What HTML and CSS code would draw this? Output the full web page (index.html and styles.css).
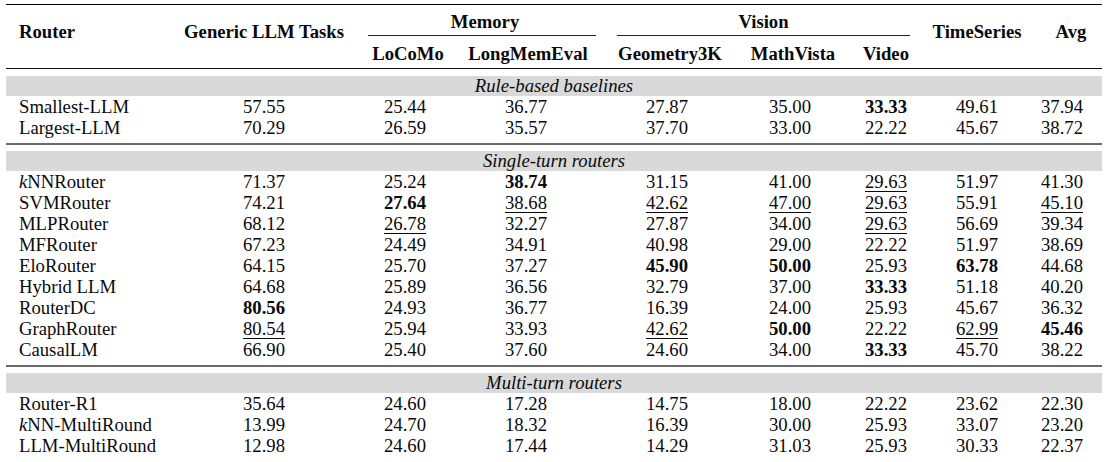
FILE: index.html
```html
<!DOCTYPE html>
<html>
<head>
<meta charset="utf-8">
<link rel="stylesheet" href="styles.css">
</head>
<body>
<div class="table">
  <div class="head">
    <div class="hc span2 left">Router</div>
    <div class="hc span2">Generic LLM Tasks</div>
    <div class="grp grp-mem">Memory</div>
    <div class="grp grp-vis">Vision</div>
    <div class="hc span2 c-ts">TimeSeries</div>
    <div class="hc span2 c-avg">Avg</div>
    <div class="sub c-loc">LoCoMo</div>
    <div class="sub c-lme">LongMemEval</div>
    <div class="sub c-geo">Geometry3K</div>
    <div class="sub c-mv">MathVista</div>
    <div class="sub c-vid">Video</div>
  </div>

  <section class="group">
    <div class="band">Rule-based baselines</div>
    <div class="row"><span>Smallest-LLM</span><span>57.55</span><span>25.44</span><span>36.77</span><span>27.87</span><span>35.00</span><span><b>33.33</b></span><span>49.61</span><span>37.94</span></div>
    <div class="row"><span>Largest-LLM</span><span>70.29</span><span>26.59</span><span>35.57</span><span>37.70</span><span>33.00</span><span>22.22</span><span>45.67</span><span>38.72</span></div>
  </section>

  <section class="group">
    <div class="band">Single-turn routers</div>
    <div class="row"><span><i>k</i>NNRouter</span><span>71.37</span><span>25.24</span><span><b>38.74</b></span><span>31.15</span><span>41.00</span><span><u>29.63</u></span><span>51.97</span><span>41.30</span></div>
    <div class="row"><span>SVMRouter</span><span>74.21</span><span><b>27.64</b></span><span><u>38.68</u></span><span><u>42.62</u></span><span><u>47.00</u></span><span><u>29.63</u></span><span>55.91</span><span><u>45.10</u></span></div>
    <div class="row"><span>MLPRouter</span><span>68.12</span><span><u>26.78</u></span><span>32.27</span><span>27.87</span><span>34.00</span><span><u>29.63</u></span><span>56.69</span><span>39.34</span></div>
    <div class="row"><span>MFRouter</span><span>67.23</span><span>24.49</span><span>34.91</span><span>40.98</span><span>29.00</span><span>22.22</span><span>51.97</span><span>38.69</span></div>
    <div class="row"><span>EloRouter</span><span>64.15</span><span>25.70</span><span>37.27</span><span><b>45.90</b></span><span><b>50.00</b></span><span>25.93</span><span><b>63.78</b></span><span>44.68</span></div>
    <div class="row"><span>Hybrid LLM</span><span>64.68</span><span>25.89</span><span>36.56</span><span>32.79</span><span>37.00</span><span><b>33.33</b></span><span>51.18</span><span>40.20</span></div>
    <div class="row"><span>RouterDC</span><span><b>80.56</b></span><span>24.93</span><span>36.77</span><span>16.39</span><span>24.00</span><span>25.93</span><span>45.67</span><span>36.32</span></div>
    <div class="row"><span>GraphRouter</span><span><u>80.54</u></span><span>25.94</span><span>33.93</span><span><u>42.62</u></span><span><b>50.00</b></span><span>22.22</span><span><u>62.99</u></span><span><b>45.46</b></span></div>
    <div class="row"><span>CausalLM</span><span>66.90</span><span>25.40</span><span>37.60</span><span>24.60</span><span>34.00</span><span><b>33.33</b></span><span>45.70</span><span>38.22</span></div>
  </section>

  <section class="group">
    <div class="band">Multi-turn routers</div>
    <div class="row"><span>Router-R1</span><span>35.64</span><span>24.60</span><span>17.28</span><span>14.75</span><span>18.00</span><span>22.22</span><span>23.62</span><span>22.30</span></div>
    <div class="row"><span><i>k</i>NN-MultiRound</span><span>13.99</span><span>24.70</span><span>18.32</span><span>16.39</span><span>30.00</span><span>25.93</span><span>33.07</span><span>23.20</span></div>
    <div class="row"><span>LLM-MultiRound</span><span>12.98</span><span>24.60</span><span>17.44</span><span>14.29</span><span>31.03</span><span>25.93</span><span>30.33</span><span>22.37</span></div>
  </section>
</div>
</body>
</html>
```

FILE: styles.css
```css
html, body {
  margin: 0;
  padding: 0;
  background: #fff;
}

body {
  width: 1106px;
  height: 462px;
  overflow: hidden;
  font-family: "Liberation Serif", "Times New Roman", serif;
  font-size: 18.7px;
  color: #0a0a0a;
}

.table {
  margin: 4px 0 0 6px;
  width: 1096px;
}

.head,
.row {
  display: grid;
  grid-template-columns: 160px 196px 86px 156px 126px 120px 72px 110px 70px;
}

.head {
  grid-template-rows: 31px 32px;
  border-top: 1.6px solid #000;
  border-bottom: 1px solid #111;
  font-weight: bold;
  line-height: 21px;
}

.hc {
  text-align: center;
  padding-top: 16px;
}

.span2 {
  grid-row: 1 / span 2;
}

.left {
  text-align: left;
  padding-left: 13px;
}

.grp {
  display: flex;
  align-items: center;
  justify-content: center;
  padding-top: 2px;
  border-bottom: 1px solid #222;
}

.grp-mem {
  grid-column: 3 / span 2;
  margin: 0 8px 0 6px;
  padding-left: 6px;
}

.grp-vis {
  grid-column: 5 / span 3;
  margin: 0 12px 0 13px;
}

.c-ts { grid-column: 8; }
.c-avg { grid-column: 9; padding-left: 8px; }

.sub {
  grid-row: 2;
  display: flex;
  align-items: center;
  justify-content: center;
  padding-top: 2px;
}

.c-loc { grid-column: 3; padding-left: 6px; }
.c-lme { grid-column: 4; padding-left: 4px; }
.c-geo { grid-column: 5; padding-left: 6px; }
.c-mv { grid-column: 6; padding-left: 6px; }
.c-vid { grid-column: 7; }

.group {
  padding-top: 7px;
}

.group + .group {
  margin-top: 5px;
  padding-top: 6px;
  border-top: 2px solid #6a6a6a;
}

.band {
  height: 20px;
  line-height: 20px;
  background: #d9d9d9;
  text-align: center;
  font-style: italic;
}

.row {
  height: 21px;
  line-height: 21px;
}

.row span {
  text-align: center;
  white-space: nowrap;
}

.row span:first-child {
  text-align: left;
  padding-left: 13px;
}

.row span:last-child {
  padding-right: 10px;
}

u {
  text-decoration-thickness: 1px;
  text-underline-offset: 3px;
}
```
